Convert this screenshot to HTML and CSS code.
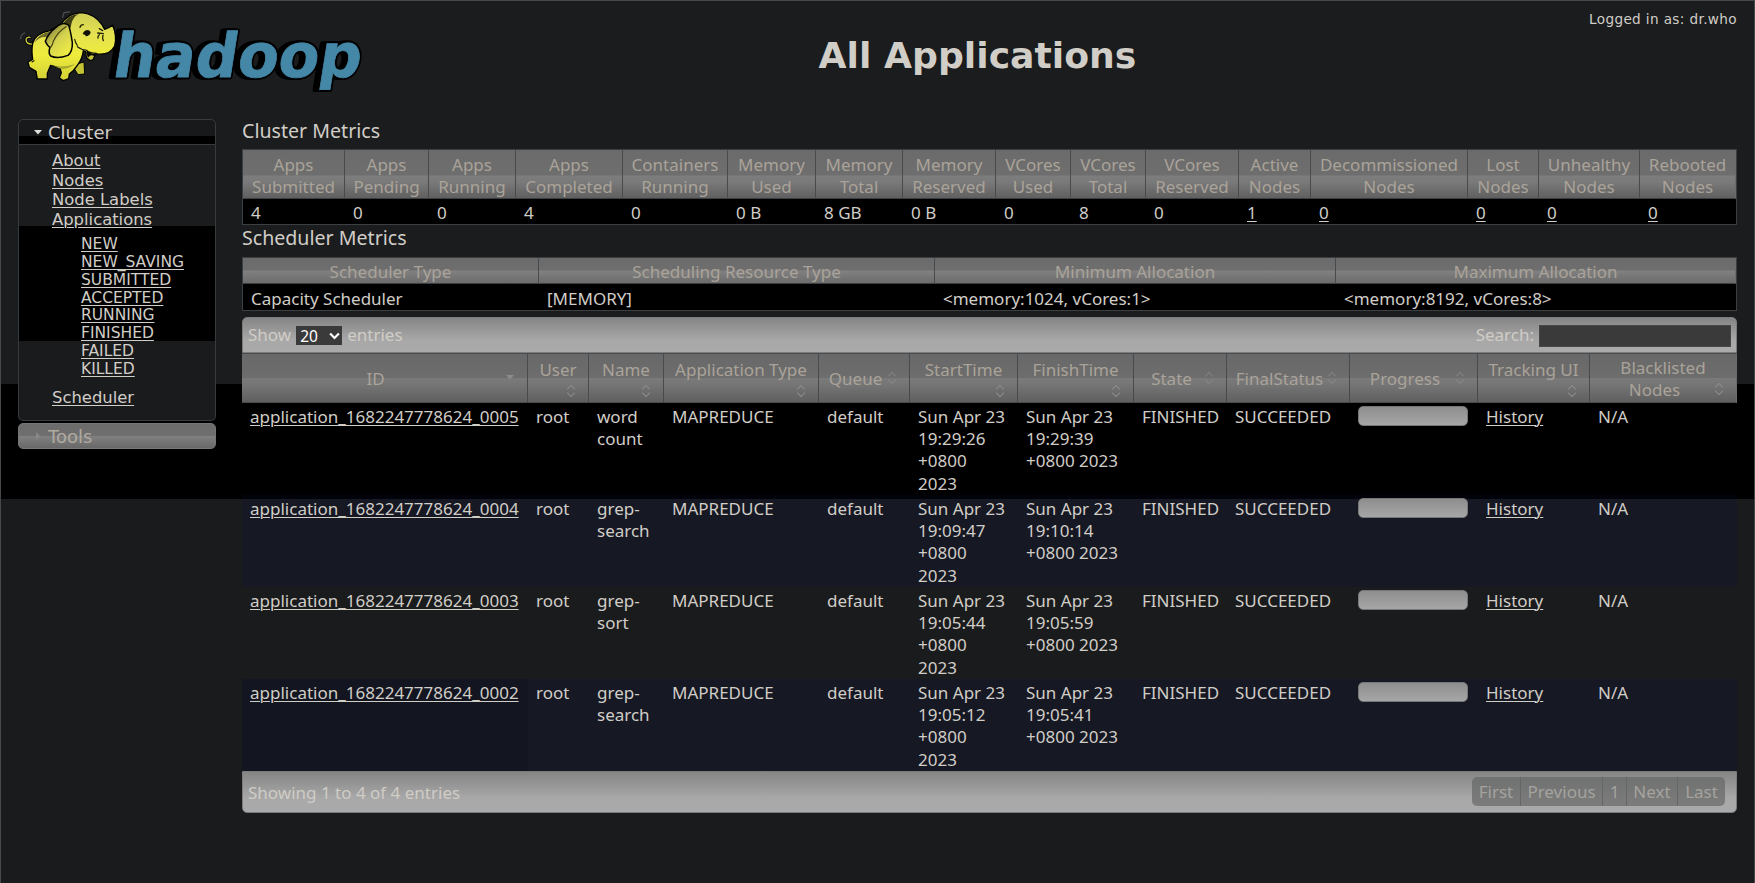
FILE: index.html
```html
<!DOCTYPE html>
<html lang="en">
<head>
<meta charset="utf-8">
<title>All Applications</title>
<link rel="stylesheet" href="styles.css">
</head>
<body>
<div class="page">
  <header class="header">
    <svg class="logo" viewBox="0 0 380 110" role="img" aria-label="hadoop">
      <defs>
        <linearGradient id="skin" gradientUnits="userSpaceOnUse" x1="200" y1="40" x2="200" y2="240">
          <stop offset="0" stop-color="#cfce55"/><stop offset=".3" stop-color="#e3e150"/><stop offset=".62" stop-color="#eeec3c"/><stop offset="1" stop-color="#d2d036"/>
        </linearGradient>
        <linearGradient id="ear" gradientUnits="userSpaceOnUse" x1="150" y1="90" x2="205" y2="150">
          <stop offset="0" stop-color="#8f8d3a"/><stop offset=".45" stop-color="#d3d150"/><stop offset="1" stop-color="#ebe944"/>
        </linearGradient>
      </defs>
      <g class="wordmark" transform="translate(127 77) skewX(-9)">
        <text class="word-shadow" x="-21" y="0" textLength="248" lengthAdjust="spacingAndGlyphs">hadoop</text>
        <text class="word-shadow" x="-18" y="0" textLength="248" lengthAdjust="spacingAndGlyphs">hadoop</text>
        <text class="word-shadow" x="-16" y="0" textLength="248" lengthAdjust="spacingAndGlyphs">hadoop</text>
        <text class="word-face" x="-16" y="0" textLength="248" lengthAdjust="spacingAndGlyphs">hadoop</text>
      </g>
      <g transform="scale(.3333)" stroke-linejoin="round" stroke-linecap="round">
        <path d="M188 52 L192 38 L208 36 M62 116 Q62 104 74 99" fill="none" stroke="#4a4c4e" stroke-width="4"/>
        <path d="M98 132 Q78 134 78 118 Q80 110 90 112" fill="none" stroke="#000" stroke-width="9"/>
        <path d="M98 132 Q78 134 78 118 Q80 110 90 112" fill="none" stroke="#cfce3c" stroke-width="4"/>
        <path d="M230 192 L252 186 L254 222 L234 224 L224 208Z" fill="#c4c334" stroke="#000" stroke-width="3"/>
        <path d="M98 130 Q106 100 150 92 L182 74 Q205 38 246 38 Q284 42 306 74 L314 88 Q328 84 338 75 Q352 110 344 138 Q330 166 292 162 L284 160 Q286 180 270 182 Q256 176 258 156 L250 152 Q248 176 232 196 Q222 212 208 222 L206 236 L190 242 L178 234 L184 218 L180 204 L152 196 L142 220 L142 237 L112 237 L108 214 L88 202 L84 186 L98 178 Q94 150 98 130Z" fill="url(#skin)" stroke="#000" stroke-width="4"/>
        <path d="M188 72 Q206 44 236 41 Q218 52 214 72 L212 84 Q200 66 188 72Z" fill="#3d3d16"/>
        <path d="M104 128 Q112 104 152 94 L142 112 Q120 106 104 128Z" fill="#6a6927"/>
        <path d="M150 194 Q180 206 226 192 Q200 210 182 206Z" fill="#a9a72c"/>
        <path d="M168 82 Q146 98 136 124 Q142 138 150 142 Q144 160 152 168 Q172 178 204 166 Q218 154 217 128 Q212 94 206 76 Q190 62 168 82Z" fill="url(#ear)" stroke="#000" stroke-width="4.5"/>
        <path d="M198 80 Q172 96 160 124 Q158 134 152 142" fill="none" stroke="#45440f" stroke-width="3.5"/>
        <path d="M232 140 Q246 150 258 150 Q268 160 290 160 M102 182 L96 186 M224 118 Q226 128 232 136" fill="none" stroke="#222208" stroke-width="3.5"/>
        <path d="M260 150 Q258 172 272 182 Q286 174 286 162 Q270 162 260 150Z" fill="#080808"/>
        <path d="M264 173 Q272 162 282 168 Q280 178 272 180Z" fill="#c5c43a"/>
        <path d="M248 102 Q252 90 264 90 Q272 92 272 98 Q268 108 258 109 Q256 103 248 102Z" fill="#111108"/>
        <path d="M240 82 Q242 74 250 74 M298 86 L308 92 M293 99 L310 101 M309 106 Q306 114 310 122 M298 104 Q293 108 294 114" fill="none" stroke="#222208" stroke-width="4"/>
      </g>
    </svg>
    <h1 class="title">All Applications</h1>
    <div class="user">Logged in as: dr.who</div>
  </header>

  <div class="body">
    <nav class="nav">
      <h3 class="nav-head open"><svg class="tri" viewBox="0 0 8 5"><path d="M0 0H8L4 4.6Z" fill="#e0dfdc"/></svg>Cluster</h3>
      <div class="nav-panel">
        <ul class="menu">
          <li><a>About</a></li><li><a>Nodes</a></li><li><a>Node Labels</a></li><li><a>Applications</a>
            <ul class="submenu">
              <li><a>NEW</a></li><li><a>NEW_SAVING</a></li><li><a>SUBMITTED</a></li><li><a>ACCEPTED</a></li><li><a>RUNNING</a></li><li><a>FINISHED</a></li><li><a>FAILED</a></li><li><a>KILLED</a></li>
            </ul></li>
          <li><a>Scheduler</a></li>
        </ul>
      </div>
      <h3 class="nav-head closed"><svg class="tri" viewBox="0 0 8 8"><path d="M2 0V8L6 4Z" fill="#878787"/></svg>Tools</h3>
    </nav>

    <main class="main">
      <h2 class="section">Cluster Metrics</h2>
      <table class="grid metrics">
        <colgroup><col style="width:102px"><col style="width:84px"><col style="width:87px"><col style="width:107px"><col style="width:105px"><col style="width:88px"><col style="width:87px"><col style="width:93px"><col style="width:75px"><col style="width:75px"><col style="width:93px"><col style="width:72px"><col style="width:157px"><col style="width:71px"><col style="width:101px"><col style="width:96px"></colgroup>
        <thead><tr><th>Apps<br>Submitted</th><th>Apps<br>Pending</th><th>Apps<br>Running</th><th>Apps<br>Completed</th><th>Containers<br>Running</th><th>Memory<br>Used</th><th>Memory<br>Total</th><th>Memory<br>Reserved</th><th>VCores<br>Used</th><th>VCores<br>Total</th><th>VCores<br>Reserved</th><th>Active<br>Nodes</th><th>Decommissioned<br>Nodes</th><th>Lost<br>Nodes</th><th>Unhealthy<br>Nodes</th><th>Rebooted<br>Nodes</th></tr></thead>
        <tbody><tr><td>4</td><td>0</td><td>0</td><td>4</td><td>0</td><td>0 B</td><td>8 GB</td><td>0 B</td><td>0</td><td>8</td><td>0</td><td><a>1</a></td><td><a>0</a></td><td><a>0</a></td><td><a>0</a></td><td><a>0</a></td></tr></tbody>
      </table>
      <h2 class="section second">Scheduler Metrics</h2>
      <table class="grid scheduler">
        <colgroup><col style="width:296px"><col style="width:396px"><col style="width:401px"><col style="width:400px"></colgroup>
        <thead><tr><th>Scheduler Type</th><th>Scheduling Resource Type</th><th>Minimum Allocation</th><th>Maximum Allocation</th></tr></thead>
        <tbody><tr><td>Capacity Scheduler</td><td>[MEMORY]</td><td>&lt;memory:1024, vCores:1&gt;</td><td>&lt;memory:8192, vCores:8&gt;</td></tr></tbody>
      </table>

      <div class="toolbar top">
        <div class="length">Show <span class="select">20<svg viewBox="0 0 10 7"><path d="M1 1.2L5 5.4L9 1.2" fill="none" stroke="#fff" stroke-width="1.9"/></svg></span> entries</div>
        <label class="search">Search: <input type="text" class="search-box"></label>
      </div>
      <table class="apps">
        <colgroup><col style="width:286px"><col style="width:61px"><col style="width:75px"><col style="width:155px"><col style="width:91px"><col style="width:108px"><col style="width:116px"><col style="width:93px"><col style="width:123px"><col style="width:128px"><col style="width:112px"><col style="width:147px"></colgroup>
        <thead><tr>
          <th><div class="cell one id"><span>ID</span><svg class="down" viewBox="0 0 8 5"><path d="M0 0H8L4 4.5Z" fill="#8b8b8b"/></svg></div></th>
          <th><div class="cell two"><span>User</span><i class="sort"></i></div></th>
          <th><div class="cell two"><span>Name</span><i class="sort"></i></div></th>
          <th><div class="cell two"><span>Application Type</span><i class="sort"></i></div></th>
          <th><div class="cell one"><span>Queue</span><i class="sort"></i></div></th>
          <th><div class="cell two"><span>StartTime</span><i class="sort"></i></div></th>
          <th><div class="cell two"><span>FinishTime</span><i class="sort"></i></div></th>
          <th><div class="cell one"><span>State</span><i class="sort"></i></div></th>
          <th><div class="cell one"><span>FinalStatus</span><i class="sort"></i></div></th>
          <th><div class="cell one"><span>Progress</span><i class="sort"></i></div></th>
          <th><div class="cell two"><span>Tracking UI</span><i class="sort"></i></div></th>
          <th><div class="cell one last"><span>Blacklisted<br><span class="nodes">Nodes</span></span><i class="sort"></i></div></th>
        </tr></thead>
        <tbody>
          <tr><td><a>application_1682247778624_0005</a></td><td>root</td><td>word<br>count</td><td>MAPREDUCE</td><td>default</td><td>Sun Apr 23<br>19:29:26<br>+0800<br>2023</td><td>Sun Apr 23<br>19:29:39<br>+0800 2023</td><td>FINISHED</td><td>SUCCEEDED</td><td><div class="bar"></div></td><td><a>History</a></td><td>N/A</td></tr>
          <tr class="even banded"><td><a>application_1682247778624_0004</a></td><td>root</td><td>grep-<br>search</td><td>MAPREDUCE</td><td>default</td><td>Sun Apr 23<br>19:09:47<br>+0800<br>2023</td><td>Sun Apr 23<br>19:10:14<br>+0800 2023</td><td>FINISHED</td><td>SUCCEEDED</td><td><div class="bar"></div></td><td><a>History</a></td><td>N/A</td></tr>
          <tr><td><a>application_1682247778624_0003</a></td><td>root</td><td>grep-<br>sort</td><td>MAPREDUCE</td><td>default</td><td>Sun Apr 23<br>19:05:44<br>+0800<br>2023</td><td>Sun Apr 23<br>19:05:59<br>+0800 2023</td><td>FINISHED</td><td>SUCCEEDED</td><td><div class="bar"></div></td><td><a>History</a></td><td>N/A</td></tr>
          <tr class="even"><td><a>application_1682247778624_0002</a></td><td>root</td><td>grep-<br>search</td><td>MAPREDUCE</td><td>default</td><td>Sun Apr 23<br>19:05:12<br>+0800<br>2023</td><td>Sun Apr 23<br>19:05:41<br>+0800 2023</td><td>FINISHED</td><td>SUCCEEDED</td><td><div class="bar"></div></td><td><a>History</a></td><td>N/A</td></tr>
        </tbody>
      </table>
      <div class="toolbar bottom">
        <div>Showing 1 to 4 of 4 entries</div>
        <div class="pager"><span class="w-first">First</span><span class="w-prev">Previous</span><span class="w-num">1</span><span class="w-next">Next</span><span class="w-last">Last</span></div>
      </div>
    </main>
  </div>
</div>
</body>
</html>
```
FILE: styles.css
```css
* { box-sizing: border-box; }
body {
  margin: 0;
  background: #1a1b1d;
  color: #d1cdc7;
  font-family: "Noto Sans", "Open Sans", sans-serif;
  font-size: 17px;
}
.page {
  width: 1755px;
  height: 883px;
  overflow: hidden;
  border: 1px solid #45494b;
  border-bottom: 0;
  background: linear-gradient(#1a1c1e 383px, #000 383px, #000 498px, #1a1b1d 498px);
}
a { text-decoration: underline; text-underline-offset: 2px; text-decoration-thickness: 1px; }

.header {
  display: grid;
  grid-template-columns: 380px 1fr 380px;
  height: 117px;
  margin: 0 17px 0 -1px;
}
.logo { width: 380px; height: 110px; margin-top: -1px; }
.word-face, .word-shadow { font: bold 61px "DejaVu Sans", sans-serif; }
.word-face { fill: #4487a7; stroke: #4487a7; stroke-width: .8px; }
.word-shadow { fill: #000; stroke: #000; stroke-width: 4.5px; stroke-linejoin: round; }
.title {
  margin: 32px 0 0;
  padding-left: 218px;
  text-align: center;
  white-space: nowrap;
  font: bold 36.2px/46px "DejaVu Sans", sans-serif;
}
.user {
  margin-top: 8px;
  text-align: right;
  font: 13.6px/20px "DejaVu Sans", sans-serif;
  letter-spacing: .37px;
}

.body { display: grid; grid-template-columns: 198px 1495px; column-gap: 26px; padding-left: 17px; align-items: start; }

.nav { font-family: "DejaVu Sans", sans-serif; padding-top: 1px; }
.nav-head {
  display: flex;
  align-items: center;
  gap: 6px;
  height: 26px;
  margin: 0;
  padding: 0 0 0 15px;
  font-size: 18px;
  font-weight: normal;
  border: 1px solid #363b3d;
}
.nav-head.open { border-radius: 5px 5px 0 0; background: linear-gradient(#18191a 16px, #000 16px); }
.nav-head.closed {
  margin-top: 2px;
  border-color: #777;
  border-radius: 5px;
  color: #b0aaa0;
  background: linear-gradient(#6b6b6b 0, #6f6f6f 50%, #808080 52%, #686868);
}
.tri { width: 8px; height: 8px; }
.open .tri { height: 5px; }
.nav-panel {
  height: 276px;
  border: 1px solid #363b3d;
  border-top: 0;
  border-radius: 0 0 5px 5px;
  background: linear-gradient(#1a1c1d 81px, #000 81px, #000 196px, #1a1b1d 196px);
  padding: 6px 0 0 33px;
}
.menu, .submenu { list-style: none; margin: 0; padding: 0; }
.menu { font-size: 16.4px; line-height: 19.6px; }
.submenu { padding: 7px 0 10px 29px; font-size: 15.5px; line-height: 17.75px; }

.section { margin: 0; height: 31px; font-size: 19.6px; font-weight: normal; line-height: 26px; }
.section.second { height: 32px; }

table { border-collapse: separate; border-spacing: 0; table-layout: fixed; width: 1495px; }
th { padding: 0; font-weight: normal; color: #aaa399; border-right: 1px solid #484b4d; white-space: nowrap; text-align: center; vertical-align: middle; }
td { padding: 0 0 0 8px; white-space: nowrap; vertical-align: top; text-align: left; }
.grid { border: 1px solid #3b3f41; background: #000; }
.grid th:last-child, .apps th:last-child { border-right-color: #6c6c6c; }
.grid thead tr { background: linear-gradient(#6b6b6b 0, #6e6e6e 51%, #7d7d7d 53%, #7a7a7a 65%, #5e5e5e); }
.metrics th { height: 49px; padding-top: 4px; line-height: 22px; border-bottom: 1px solid #3b3f41; }
.metrics td { height: 25px; padding-top: 2px; line-height: 23px; }
.scheduler thead tr { background: linear-gradient(#6b6b6b 0, #6e6e6e 46%, #808080 50%, #6a6a6a); }
.scheduler th { height: 26px; padding-top: 2px; line-height: 23px; border-bottom: 1px solid #3b3f41; }
.scheduler td { height: 26px; padding-top: 3px; line-height: 23px; }

.toolbar {
  display: flex;
  justify-content: space-between;
  align-items: center;
  border: 1px solid #7b7c7d;
  background: linear-gradient(#858585, #a8a8a8 65%, #aaa);
  color: #d0ccc6;
}
.toolbar.top { margin-top: 6px; height: 36px; border-radius: 5px 5px 0 0; padding: 0 5px 1px 5px; }
.toolbar.bottom { height: 42px; border-radius: 0 0 5px 5px; padding: 0 11px 0 5px; }
.length, .search { display: flex; align-items: center; gap: 5px; }
.select {
  display: flex;
  align-items: center;
  justify-content: space-between;
  width: 46px;
  height: 19px;
  margin-top: 2px;
  padding: 0 2px 0 4px;
  background: #3a3a3a;
  color: #fff;
  font-size: 15.5px;
}
.select svg { width: 11px; height: 8px; }
.search-box { width: 192px; height: 22px; margin: 3px 0 0; padding: 0; border: 1px solid #474747; background: #3a3a3a; color: #fff; }

.apps thead tr { background: linear-gradient(#686868 0, #6d6d6d 49%, #7a7a7a 51%, #767676 62%, #5e5e5e); }
.apps th { height: 50px; border-top: 1px solid #484c4e; border-bottom: 1px solid #484c4e; }
.cell { position: relative; height: 48px; display: flex; justify-content: center; line-height: 22px; }
.cell.one { align-items: center; padding: 2px 17px 0 0; }
.cell.two { align-items: flex-start; padding-top: 5px; }
.cell.id { padding-right: 18px; }
.cell.last { padding: 2px 0 0; }
.cell.last .nodes { padding-right: 17px; }
.down { position: absolute; right: 13px; top: 21px; width: 8px; height: 5px; }
.sort { position: absolute; right: 13px; top: 31px; width: 8px; height: 11px; }
.one .sort { top: 18px; opacity: .65; }
.last .sort { top: 29px; opacity: 1; }
.sort::before, .sort::after {
  content: "";
  position: absolute;
  left: 1px;
  width: 5px;
  height: 5px;
  border: solid #8c8c8c;
  border-width: 1.5px 0 0 1.5px;
}
.sort::before { top: 1px; transform: rotate(45deg); }
.sort::after { bottom: 0; transform: rotate(225deg); }

.apps tbody td { height: 92px; padding-top: 3px; line-height: 22.2px; }
.even { background: #161823; }
.even td:first-child { background: #131620; }
.banded td, .even.banded td:first-child { background: linear-gradient(#02020a 4px, #161823 4px) no-repeat; }
.bar { width: 110px; height: 20px; border: 1px solid #777; border-radius: 5px; background: linear-gradient(#8e8e8e, #a6a6a6); }

.pager { display: flex; height: 29px; border-radius: 5px; overflow: hidden; background: linear-gradient(#707171, #7c7c7c); color: #a5a39e; line-height: 30px; margin-bottom: 1px; }
.pager span { text-align: center; border-right: 1px solid #666; }
.pager span:last-child { border-right: 0; }
.w-first { width: 49px; }
.w-prev { width: 82px; }
.w-num { width: 24px; }
.w-next { width: 51px; }
.w-last { width: 47px; }
```
